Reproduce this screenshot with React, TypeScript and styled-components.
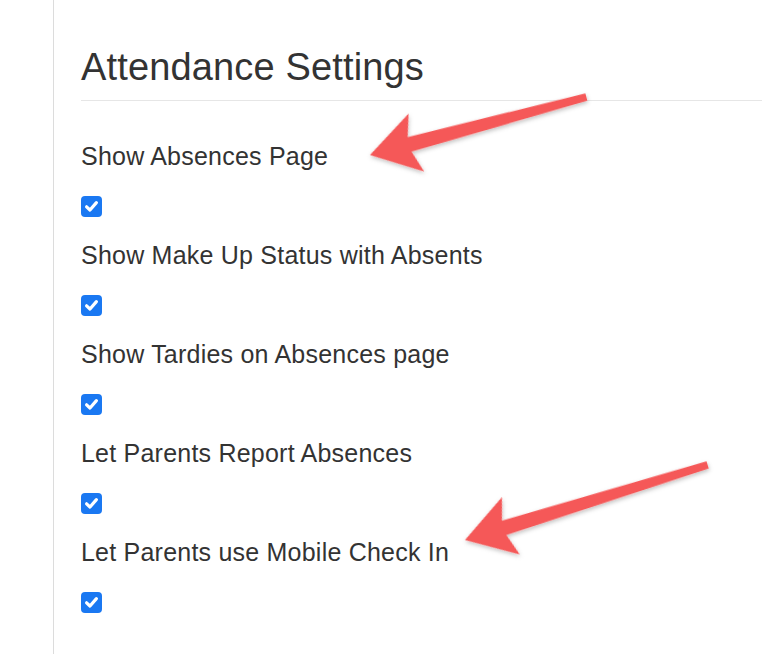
import React, { FC } from "react";
import styled, { createGlobalStyle } from "styled-components";

const GlobalStyle = createGlobalStyle`
  html, body {
    margin: 0;
    padding: 0;
    background: #fff;
    overflow: hidden;
  }
  body {
    font-family: "Liberation Sans", Arial, Helvetica, sans-serif;
    color: #333;
  }
`;

const Page = styled.div`
  position: relative;
  display: flex;
  width: 762px;
  height: 654px;
`;

const Sidebar = styled.div`
  width: 53px;
  flex-shrink: 0;
  border-right: 1px solid #dcdcdc;
`;

const Content = styled.main`
  flex: 1;
  padding: 44px 0 0 27px;
`;

const Title = styled.h1`
  margin: 0;
  padding-bottom: 10px;
  font-size: 38px;
  line-height: 46px;
  font-weight: 400;
  letter-spacing: 0.15px;
  color: #333;
  border-bottom: 1px solid #e6e6e6;
`;

const List = styled.div`
  display: flex;
  flex-direction: column;
  padding-top: 40px;
`;

const Setting = styled.div`
  display: flex;
  flex-direction: column;
  align-items: flex-start;
  gap: 25px;
  padding-bottom: 23px;
`;

const Label = styled.label`
  font-size: 25px;
  line-height: 30px;
  letter-spacing: 0.22px;
  color: #333;
`;

const Box = styled.span<{ $checked: boolean }>`
  display: inline-flex;
  align-items: center;
  justify-content: center;
  width: 21px;
  height: 21px;
  border-radius: 4px;
  background: ${(p) => (p.$checked ? "#1a78f2" : "#fff")};
  border: ${(p) => (p.$checked ? "none" : "1px solid #999")};
  box-sizing: border-box;
`;

const Overlay = styled.svg`
  position: absolute;
  top: 0;
  left: 0;
  pointer-events: none;
`;

const Checkbox: FC<{ checked: boolean }> = ({ checked }) => (
  <Box $checked={checked}>
    {checked && (
      <svg width="15" height="15" viewBox="0 0 15 15">
        <path
          d="M2.6 7.8 L6 11 L12.4 3.6"
          fill="none"
          stroke="#fff"
          strokeWidth="3.2"
          strokeLinecap="round"
          strokeLinejoin="round"
        />
      </svg>
    )}
  </Box>
);

interface IArrow {
  x: number;
  y: number;
  angle: number;
  length: number;
}

const Arrow: FC<IArrow> = ({ x, y, angle, length }) => (
  <polygon
    transform={`translate(${x} ${y}) rotate(${angle})`}
    points={`0,0 48,-30 41,-7.5 ${length},-3.8 ${length},3.8 41,7.5 48,30`}
    fill="#f55858"
    filter="url(#shadow)"
  />
);

const settings = [
  "Show Absences Page",
  "Show Make Up Status with Absents",
  "Show Tardies on Absences page",
  "Let Parents Report Absences",
  "Let Parents use Mobile Check In",
];

const arrows: IArrow[] = [
  { x: 370, y: 155, angle: -15, length: 224 },
  { x: 465, y: 540, angle: -17.2, length: 254 },
];

const App: FC = () => (
  <>
    <GlobalStyle />
    <Page>
      <Sidebar />
      <Content>
        <Title>Attendance Settings</Title>
        <List>
          {settings.map((s) => (
            <Setting key={s}>
              <Label>{s}</Label>
              <Checkbox checked />
            </Setting>
          ))}
        </List>
      </Content>
      <Overlay width="762" height="654" viewBox="0 0 762 654">
        <defs>
          <filter id="shadow" x="-20%" y="-50%" width="140%" height="200%">
            <feDropShadow dx="0" dy="2" stdDeviation="2" floodColor="#000" floodOpacity="0.25" />
          </filter>
        </defs>
        {arrows.map((a, i) => (
          <Arrow key={i} {...a} />
        ))}
      </Overlay>
    </Page>
  </>
);

export default App;
